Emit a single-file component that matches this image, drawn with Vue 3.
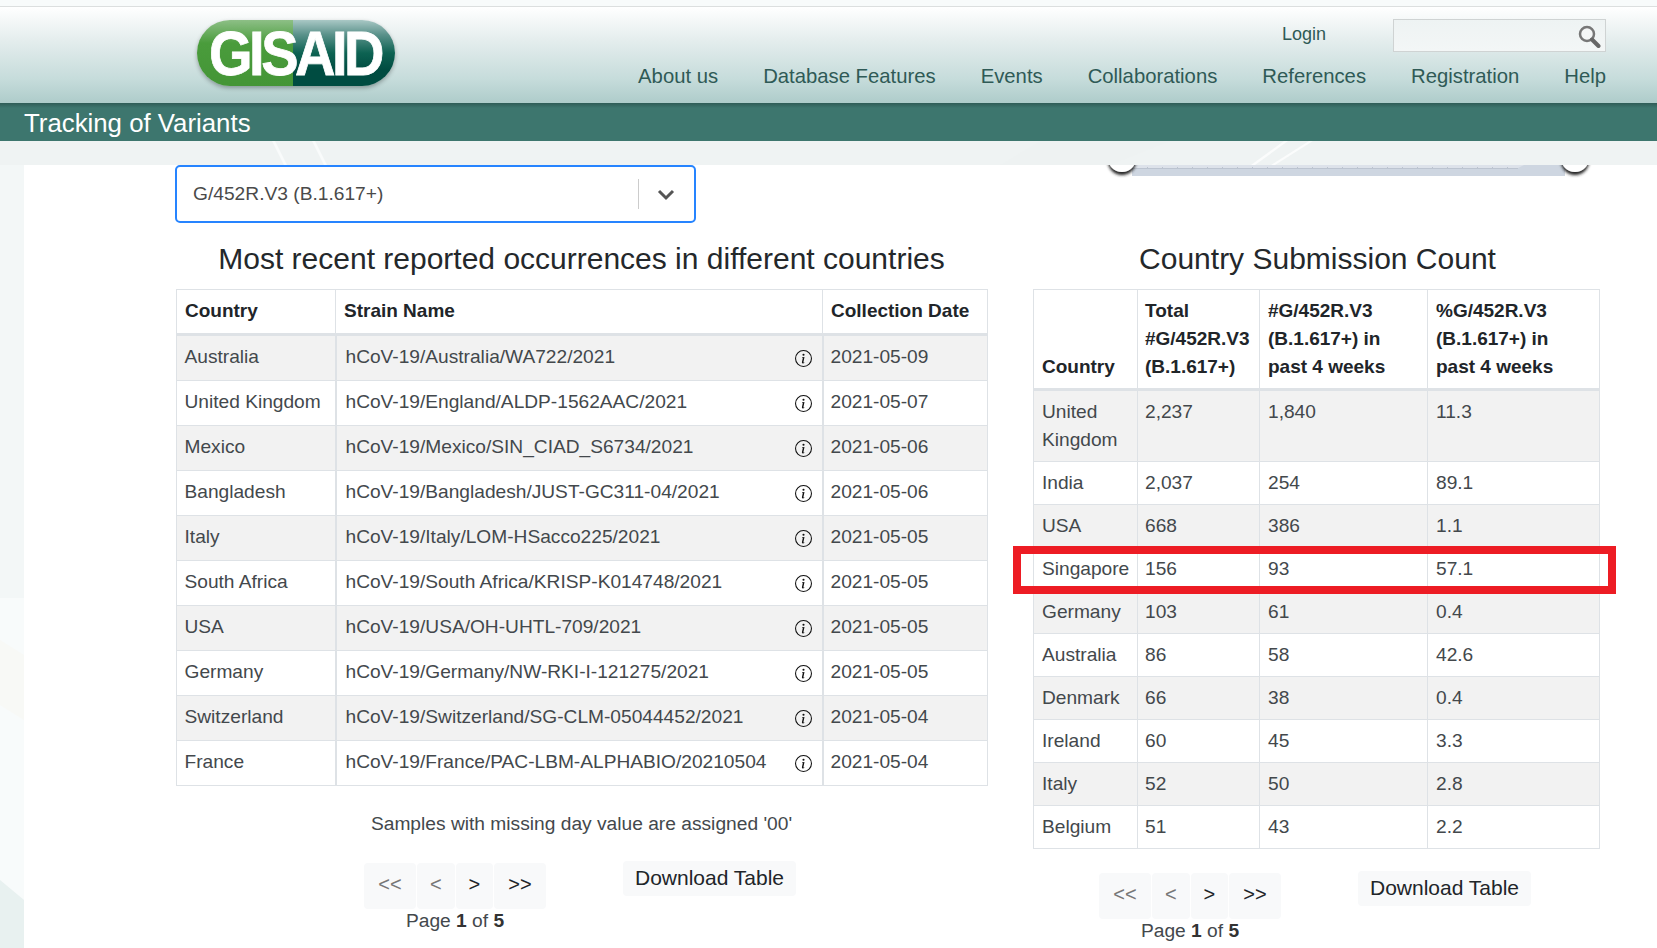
<script setup>
const navItems = ['About us', 'Database Features', 'Events', 'Collaborations', 'References', 'Registration', 'Help']
const recent = [
  ['Australia', 'hCoV-19/Australia/WA722/2021', '2021-05-09'],
  ['United Kingdom', 'hCoV-19/England/ALDP-1562AAC/2021', '2021-05-07'],
  ['Mexico', 'hCoV-19/Mexico/SIN_CIAD_S6734/2021', '2021-05-06'],
  ['Bangladesh', 'hCoV-19/Bangladesh/JUST-GC311-04/2021', '2021-05-06'],
  ['Italy', 'hCoV-19/Italy/LOM-HSacco225/2021', '2021-05-05'],
  ['South Africa', 'hCoV-19/South Africa/KRISP-K014748/2021', '2021-05-05'],
  ['USA', 'hCoV-19/USA/OH-UHTL-709/2021', '2021-05-05'],
  ['Germany', 'hCoV-19/Germany/NW-RKI-I-121275/2021', '2021-05-05'],
  ['Switzerland', 'hCoV-19/Switzerland/SG-CLM-05044452/2021', '2021-05-04'],
  ['France', 'hCoV-19/France/PAC-LBM-ALPHABIO/20210504', '2021-05-04'],
]
const counts = [
  ['United Kingdom', '2,237', '1,840', '11.3'],
  ['India', '2,037', '254', '89.1'],
  ['USA', '668', '386', '1.1'],
  ['Singapore', '156', '93', '57.1'],
  ['Germany', '103', '61', '0.4'],
  ['Australia', '86', '58', '42.6'],
  ['Denmark', '66', '38', '0.4'],
  ['Ireland', '60', '45', '3.3'],
  ['Italy', '52', '50', '2.8'],
  ['Belgium', '51', '43', '2.2'],
]
const pager = ['<<', '<', '>', '>>']
</script>

<template>
  <div class="page">
    <svg class="backdrop" width="1657" height="948" viewBox="0 0 1657 948" aria-hidden="true">
      <rect x="0" y="141" width="1657" height="24" fill="#eff3f3" />
      <polygon points="0,165 24,165 24,598 0,598" fill="#f3f7f7" />
      <polygon points="0,640 24,655 24,720 0,705" fill="#f8f9f6" />
      <polygon points="0,880 24,900 24,948 0,948" fill="#e8f1f0" />
      <polygon points="272,141 275,141 287,165 284,165" fill="#f9fbfb" />
      <polygon points="312,141 315,141 327,165 324,165" fill="#f9fbfb" />
      <polygon points="1284,141 1288,141 1255,165 1251,165" fill="#fbfcfc" />
      <polygon points="1309,141 1313,141 1275,165 1271,165" fill="#fbfcfc" />
      <polygon points="1110,165 1171,141 1040,141 1000,165" fill="#eef2f2" />
    </svg>

    <header class="topbar">
      <div class="logo"><span class="logo-text">GISAID</span></div>
      <div class="topbar-right">
        <div class="utility">
          <a class="login">Login</a>
          <div class="search">
            <svg class="search-icon" width="24" height="24" viewBox="0 0 24 24" aria-hidden="true">
              <circle cx="10" cy="10" r="7" fill="#f4f6f6" stroke="#777" stroke-width="2.5" />
              <path d="M15 15.5 L21.5 22" stroke="#666" stroke-width="4" stroke-linecap="round" />
            </svg>
          </div>
        </div>
        <nav class="nav">
          <a v-for="item in navItems" :key="item">{{ item }}</a>
        </nav>
      </div>
    </header>

    <div class="titlebar">Tracking of Variants</div>
    <div class="strip"></div>

    <main class="panel">
      <svg class="slider-fragment" width="500" height="20" viewBox="0 0 500 20" aria-hidden="true">
        <defs>
          <filter id="notch" x="-30%" y="-50%" width="160%" height="220%">
            <feDropShadow dx="0" dy="3" stdDeviation="1.6" flood-color="#222" flood-opacity="1" />
          </filter>
        </defs>
        <rect x="32" y="0" width="433" height="11" fill="#ced6e1" />
        <path d="M32 0 H424 L416 4 H32 Z" fill="#dde2ea" />
        <line x1="32" y1="3.5" x2="418" y2="3.5" stroke="#bcc4d0" stroke-width="1" />
        <line x1="32" y1="2.5" x2="418" y2="2.5" stroke="#bcc4d0" stroke-width="1" stroke-dasharray="1 14" />
        <circle cx="22" cy="-7" r="14" fill="#fff" filter="url(#notch)" />
        <circle cx="475" cy="-7" r="14" fill="#fff" filter="url(#notch)" />
      </svg>

      <div class="select">
        <span class="select-value">G/452R.V3 (B.1.617+)</span>
        <span class="select-sep"></span>
        <svg class="chevron" width="20" height="20" viewBox="0 0 20 20" aria-hidden="true">
          <path d="M3 7 L10 14 L17 7" fill="none" stroke="#555" stroke-width="3" />
        </svg>
      </div>

      <div class="columns">
        <section class="col-left">
          <h2>Most recent reported occurrences in different countries</h2>
          <table class="recent">
            <colgroup>
              <col class="r1" /><col class="r2" /><col class="r3" />
            </colgroup>
            <thead>
              <tr><th>Country</th><th>Strain Name</th><th>Collection Date</th></tr>
            </thead>
            <tbody>
              <tr v-for="row in recent" :key="row[1]">
                <td>{{ row[0] }}</td>
                <td class="strain">
                  <div class="strain-inner">
                    <span>{{ row[1] }}</span>
                    <svg class="info" width="17" height="17" viewBox="0 0 16 16" aria-hidden="true">
                      <path fill="#111" d="M8 15A7 7 0 1 1 8 1a7 7 0 0 1 0 14zm0 1A8 8 0 1 0 8 0a8 8 0 0 0 0 16z" />
                      <path fill="#111" d="m8.93 6.59-2.29.29-.08.38.45.08c.29.07.35.18.29.47l-.74 3.47c-.19.9.1 1.32.81 1.32.55 0 1.19-.25 1.48-.6l.09-.42c-.2.18-.5.25-.69.25-.27 0-.37-.19-.3-.53l.98-4.71zM9 4.5a1 1 0 1 1-2 0 1 1 0 0 1 2 0z" />
                    </svg>
                  </div>
                </td>
                <td class="date">{{ row[2] }}</td>
              </tr>
            </tbody>
          </table>
          <p class="note">Samples with missing day value are assigned '00'</p>
          <div class="pager-row left-pager">
            <div class="pager-block">
              <div class="pager">
                <button v-for="(p, i) in pager" :key="p" :class="{ off: i < 2 }">{{ p }}</button>
              </div>
              <div class="page-label">Page <b>1</b> of <b>5</b></div>
            </div>
            <button class="download">Download Table</button>
          </div>
        </section>

        <section class="col-right">
          <h2>Country Submission Count</h2>
          <table class="counts">
            <colgroup>
              <col class="c1" /><col class="c2" /><col class="c3" /><col class="c4" />
            </colgroup>
            <thead>
              <tr>
                <th>Country</th>
                <th>Total #G/452R.V3 (B.1.617+)</th>
                <th>#G/452R.V3 (B.1.617+) in past 4 weeks</th>
                <th>%G/452R.V3 (B.1.617+) in past 4 weeks</th>
              </tr>
            </thead>
            <tbody>
              <tr v-for="row in counts" :key="row[0]">
                <td v-for="cell in row" :key="cell">{{ cell }}</td>
              </tr>
            </tbody>
          </table>
          <div class="highlight"></div>
          <div class="pager-row right-pager">
            <div class="pager-block">
              <div class="pager">
                <button v-for="(p, i) in pager" :key="p" :class="{ off: i < 2 }">{{ p }}</button>
              </div>
              <div class="page-label">Page <b>1</b> of <b>5</b></div>
            </div>
            <button class="download">Download Table</button>
          </div>
        </section>
      </div>
    </main>
  </div>
</template>

<style>
html, body { margin: 0; background: #fff; overflow: hidden; }
</style>

<style scoped>
.page {
  position: relative;
  width: 1657px;
  height: 948px;
  overflow: hidden;
  font-family: "Liberation Sans", Arial, sans-serif;
  color: #43484c;
  background: #f8fbfb;
}
.backdrop { position: absolute; left: 0; top: 0; }
.topbar {
  position: relative;
  box-sizing: border-box;
  height: 97px;
  margin-top: 6px;
  border-top: 1px solid #dcdfdf;
  padding: 0 51px 0 197px;
  display: flex;
  justify-content: space-between;
  background: linear-gradient(#ffffff 0%, #e4eded 35%, #c6dcdb 75%, #aeccca 100%);
}
.logo {
  width: 198px;
  height: 66px;
  margin-top: 13px;
  border-radius: 33px;
  display: flex;
  align-items: center;
  justify-content: center;
  box-shadow: 0 2px 4px rgba(0, 0, 0, 0.3);
  background:
    linear-gradient(#8dbf86, #4a9c3c 35%, #449536 100%) left / 96px 100% no-repeat,
    linear-gradient(#a9c8c5, #5b928b 22%, #0d6252 50%, #004c41 75%) right / 102px 100% no-repeat;
}
.logo-text {
  display: inline-block;
  font-weight: 700;
  font-size: 56px;
  letter-spacing: -3.5px;
  -webkit-text-stroke: 0.7px #fff;
  color: #fff;
  line-height: 66px;
  transform: scaleY(1.12);
  margin-right: 2px;
  padding-top: 1px;
}
.topbar-right {
  display: flex;
  flex-direction: column;
  align-items: flex-end;
}
.utility {
  display: flex;
  align-items: center;
  margin-top: 12px;
  height: 33px;
}
.login { color: #2f5a56; font-size: 18px; margin: -2px 67px 0 0; }
.search {
  box-sizing: border-box;
  width: 213px;
  height: 33px;
  border: 1px solid #cfd3d3;
  background: linear-gradient(#eef3f3, #f3f6f6);
  display: flex;
  align-items: center;
  justify-content: flex-end;
  padding-right: 4px;
}
.search-icon { display: block; }
.nav {
  display: flex;
  gap: 45px;
  margin-top: 12px;
  font-size: 20.3px;
  line-height: 24px;
  color: #2f5a56;
}
.titlebar {
  position: relative;
  box-sizing: border-box;
  height: 38px;
  background: #3d766e;
  background-image: linear-gradient(#2f5c57 0, #3d766e 5px);
  color: #fff;
  font-size: 25.8px;
  line-height: 40px;
  padding-left: 24px;
}
.strip { height: 24px; }
.panel {
  position: relative;
  margin-left: 24px;
  height: 783px;
  background: #fff;
  padding-left: 152px;
}
.slider-fragment { position: absolute; left: 1076px; top: 0; }
.select {
  position: relative;
  box-sizing: border-box;
  width: 521px;
  height: 58px;
  margin-left: -1px;
  border: 2px solid #2684ff;
  border-radius: 5px;
  background: #fff;
  display: flex;
  align-items: center;
  padding-left: 16px;
  font-size: 19.2px;
  color: #4a4a4a;
}
.select-value { flex: 1; }
.select-sep { width: 1px; height: 30px; background: #ccc; }
.chevron { margin: 0 18px 0 17px; }
.columns {
  display: flex;
  align-items: flex-start;
}
.col-left { width: 811px; margin-right: 46px; flex: none; position: relative; }
.col-right { width: 566px; flex: none; position: relative; }
.col-right h2 { padding-left: 3px; }
h2 {
  margin: 0;
  height: 66px;
  line-height: 72px;
  text-align: center;
  font-weight: 400;
  font-size: 30px;
  color: #24282b;
}
table {
  width: 100%;
  table-layout: fixed;
  border-collapse: collapse;
  font-size: 19.15px;
  line-height: 28px;
  background: #fff;
}
th, td {
  box-sizing: border-box;
  border: 1px solid #dee2e6;
  text-align: left;
  vertical-align: top;
}
th {
  vertical-align: bottom;
  font-weight: 700;
  font-size: 19px;
  color: #212529;
  border-bottom: 3px solid #dee2e6;
  padding: 7px 8px 8px;
}
tbody tr:nth-child(odd) { background: #f2f2f2; }
.r1 { width: 159px; }
.r2 { width: 487px; }
.r3 { width: 165px; }
.recent td { height: 45px; padding: 6.5px 8px 9.5px 7.5px; }
.recent td.strain { border-left-width: 2px; border-right-width: 2px; padding: 7px 10px 9px 9px; }
.recent td.date { padding-left: 7px; }
.strain-inner { display: flex; align-items: center; justify-content: space-between; }
.info { flex: none; margin-top: 3px; }
.c1 { width: 104px; }
.c2 { width: 122px; }
.c3 { width: 168px; }
.c4 { width: 172px; }
.counts th { padding: 7px 8px 7px; }
.counts th:last-child { padding-right: 30px; }
.counts td { height: 43px; padding: 7px 8px 7px; }
.counts th:nth-child(2), .counts td:nth-child(2) { padding-left: 7px; }
.highlight {
  position: absolute;
  left: -20px;
  top: 323px;
  width: 603px;
  height: 48px;
  box-sizing: border-box;
  border: 8px solid #ed1c24;
}
.note {
  margin: 0;
  height: 53px;
  line-height: 76px;
  text-align: center;
  font-size: 19.2px;
}
.pager-row { display: flex; align-items: flex-start; margin-top: 24px; }
.left-pager { padding-left: 188px; }
.right-pager { padding-left: 66px; }
.pager-block { width: 182px; flex: none; }
.pager { display: flex; height: 46px; gap: 1px; }
.pager button {
  border: 0;
  border-radius: 4px;
  background: #f8f9fa;
  font-family: inherit;
  font-size: 20px;
  font-weight: 400;
  color: #212529;
  padding: 0 0 4px;
  flex: 1 1 auto;
  width: 38px;
}
.pager button:first-child, .pager button:last-child { flex: none; width: 52px; }
.pager button.off { color: #777; }
.page-label { text-align: center; font-size: 19.2px; line-height: 24px; }
.page-label b { color: #333; }
.download {
  margin: -2px 0 0 77px;
  width: 173px;
  height: 35px;
  border: 0;
  border-radius: 4px;
  background: #f8f9fa;
  font-family: inherit;
  font-size: 21px;
  color: #212529;
  padding: 0 0 2px;
}
</style>
